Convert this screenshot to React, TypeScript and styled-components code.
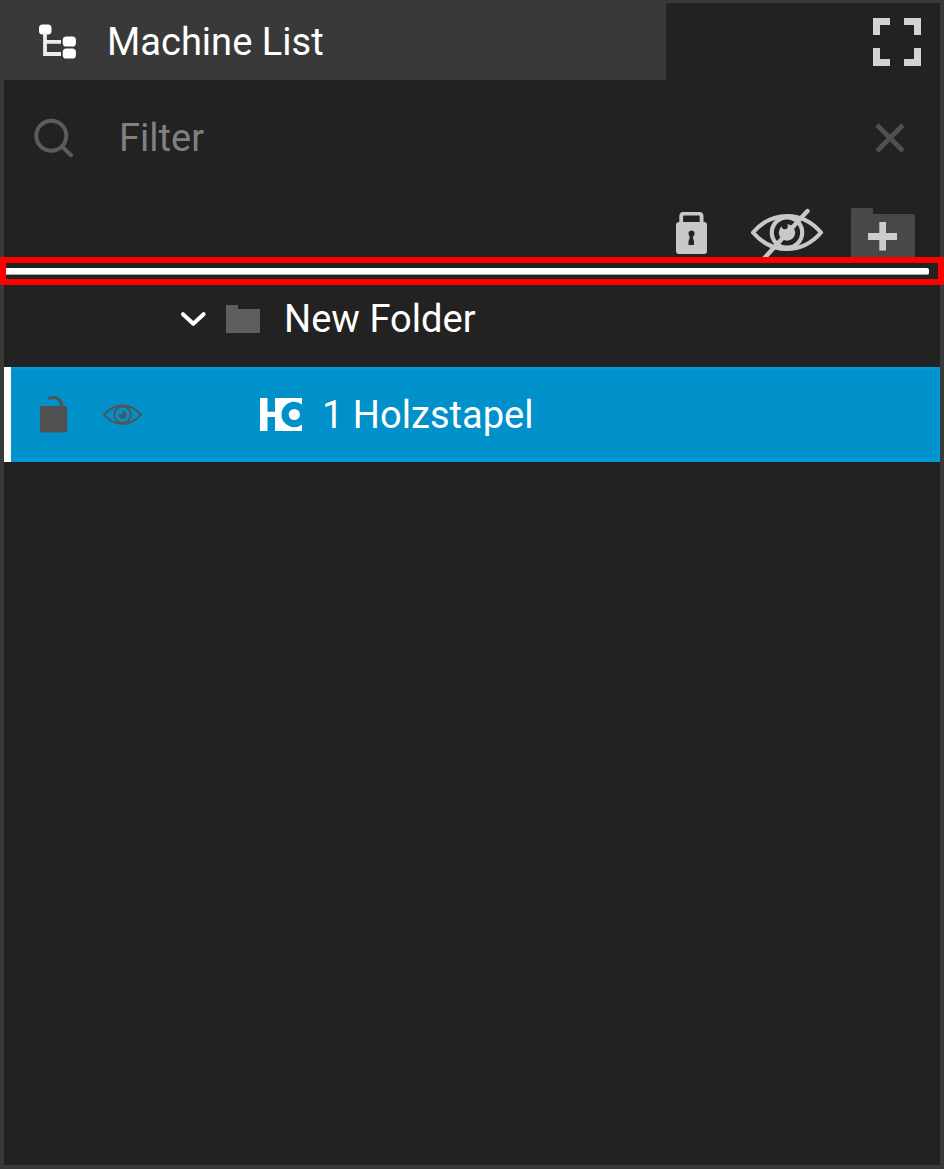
import React from "react";
import styled, { createGlobalStyle } from "styled-components";

const GlobalStyle = createGlobalStyle`
  * { box-sizing: border-box; }
  body { margin: 0; background: #222222; }
`;

const Panel = styled.main`
  display: flex;
  flex-direction: column;
  width: 944px;
  height: 1169px;
  border: 4px solid #393939;
  border-top-width: 3px;
  background: #222222;
  color: #ffffff;
  font-family: Roboto, "Liberation Sans", sans-serif;
  font-size: 38.1px;
  line-height: 46px;
`;

const Header = styled.header`
  display: flex;
  justify-content: space-between;
  height: 77px;
  flex: none;
`;

const Tab = styled.div`
  display: flex;
  align-items: center;
  gap: 30px;
  width: 662px;
  padding-left: 34px;
  background: #393939;
`;

const FullscreenButton = styled.button`
  display: flex;
  align-items: center;
  padding: 1px 15px 0 0;
  border: 0;
  background: none;
`;

const FilterRow = styled.label`
  display: flex;
  align-items: center;
  flex: none;
  height: 116px;
  padding: 0 34px 0 30px;
`;

const FilterInput = styled.input`
  flex: 1;
  min-width: 0;
  height: 46px;
  margin-left: 45px;
  padding: 0;
  border: 0;
  outline: 0;
  background: none;
  color: #ffffff;
  font: inherit;
  &::placeholder { color: #808080; opacity: 1; }
`;

const Toolbar = styled.div`
  display: flex;
  justify-content: flex-end;
  align-items: flex-end;
  flex: none;
  height: 61px;
  padding-right: 25px;
`;

const Tool = styled.button<{ $gap?: number; $lift?: number }>`
  display: flex;
  margin: 0 0 ${(p) => p.$lift ?? 0}px ${(p) => p.$gap ?? 0}px;
  padding: 0;
  border: 0;
  background: none;
`;

const DropZone = styled.div`
  flex: none;
  height: 28px;
  margin: 0 -4px;
  padding: 5px 9px 0 0;
  border: 6px solid #ff0000;
  background: #222222;
`;

const DropLine = styled.div`
  height: 7px;
  border-bottom: 1px solid #a3aa9f;
  border-radius: 0 2px 2px 0;
  background: #ffffff;
`;

const FolderRow = styled.div`
  display: flex;
  align-items: center;
  flex: none;
  height: 82px;
  padding: 0 0 14px 176px;
`;

const FolderIcon = styled.svg`
  margin: 0 24px 0 19px;
`;

const MachineRow = styled.div`
  display: flex;
  align-items: center;
  flex: none;
  height: 95px;
  padding-left: 29px;
  border-left: 7px solid #ffffff;
  background: #0090ca;
  box-shadow: inset -4px 0 3px -1px #009ada, inset 0 4px 3px -1px #009ada, inset 0 -7px 4px -2px #0099d8;
`;

const VisibilityIcon = styled.svg`
  margin: 0 118px 0 35px;
`;

const MachineName = styled.span`
  margin-left: 20px;
`;

const Label = styled.span`
  white-space: pre;
`;

export default function App() {
  return (
    <>
      <GlobalStyle />
      <Panel>
        <Header>
          <Tab>
            <svg width="39" height="36" viewBox="0 0 39 36" fill="#fff">
              <rect x="1" y="0.6" width="12.5" height="10" rx="3.5" />
              <path d="M7 9V30H23M7 17.8H23" fill="none" stroke="#ededed" strokeWidth="3.8" />
              <rect x="24.7" y="12.6" width="13.2" height="10" rx="3.7" />
              <rect x="24.7" y="24.6" width="13.2" height="10" rx="3.7" />
            </svg>
            <Label>Machine List</Label>
          </Tab>
          <FullscreenButton aria-label="Fullscreen">
            <svg width="56" height="48" viewBox="0 0 56 48" fill="#d3d3d3">
              <path d="M4 0H21V7H11V17H4ZM35 0H52V17H45V7H35ZM4 30H11V41H21V48H4ZM45 30H52V48H35V41H45Z" />
            </svg>
          </FullscreenButton>
        </Header>
        <FilterRow>
          <svg width="40" height="40" viewBox="0 0 40 40" fill="none" stroke="#5c5c5c" strokeWidth="4" strokeLinecap="round">
            <circle cx="17.3" cy="17.8" r="15" />
            <path d="M28.2 28.8L37 37.2" />
          </svg>
          <FilterInput placeholder="Filter" aria-label="Filter" />
          <svg width="32" height="32" viewBox="0 0 32 32" stroke="#505050" strokeWidth="4.8">
            <path d="M3 3L29 29M29 3L3 29" />
          </svg>
        </FilterRow>
        <Toolbar>
          <Tool aria-label="Lock" $lift={3}>
            <svg width="31" height="42" viewBox="0 0 31 42">
              <path d="M5.2 13V4.5Q5.2 1.7 8 1.7H22.8Q25.6 1.7 25.6 4.5V13" fill="none" stroke="#c8c8c8" strokeWidth="3.8" />
              <rect x="0" y="10" width="31" height="32" rx="3" fill="#c8c8c8" />
              <path d="M12.4 21.5a3.1 3.1 0 1 1 5.7 1.7L16.8 25.5 18 29.5V33H12.5V29.5L13.8 25.5Z" fill="#242424" />
            </svg>
          </Tool>
          <Tool aria-label="Hide" $gap={43}>
            <svg width="74" height="50" viewBox="0 0 74 50" fill="none" stroke="#c8c8c8">
              <path d="M3 25.5C22 3.5 52 3.5 71 25.5C52 47.5 22 47.5 3 25.5Z" strokeWidth="4.2" strokeLinejoin="round" />
              <circle cx="37" cy="25.5" r="15.2" strokeWidth="4.2" />
              <circle cx="37" cy="25.5" r="8.2" fill="#c8c8c8" stroke="none" />
              <circle cx="34.8" cy="19.2" r="3" fill="#222222" stroke="none" />
              <path d="M13.5 52L57.5 4" strokeWidth="4.4" strokeLinecap="round" />
            </svg>
          </Tool>
          <Tool aria-label="Add folder" $gap={27}>
            <svg width="64" height="50" viewBox="0 0 64 50">
              <path d="M0 50V2Q0 1 1 1H21Q22 1 22 2V7H62Q64 7 64 9V50Z" fill="#484848" />
              <path d="M28.3 15H35V26H46V33H35V43.5H28.3V33H17V26H28.3Z" fill="#cdcdcd" />
            </svg>
          </Tool>
        </Toolbar>
        <DropZone>
          <DropLine />
        </DropZone>
        <FolderRow>
          <svg width="27" height="16" viewBox="0 0 27 16" fill="none" stroke="#fff" strokeWidth="4" strokeLinecap="round" strokeLinejoin="round">
            <path d="M3 3.2L13.3 12.8L23.6 3.2" />
          </svg>
          <FolderIcon width="34" height="28" viewBox="0 0 34 28" fill="#5e5e5e">
            <path d="M0 0H12V4H34V28H0Z" />
          </FolderIcon>
          <Label>New Folder</Label>
        </FolderRow>
        <MachineRow>
          <svg width="27" height="37" viewBox="0 0 27 37">
            <path d="M9.5 2.2C16 .2 21.5 3 22 11" fill="none" stroke="#505255" strokeWidth="3" strokeLinecap="round" />
            <rect x="0" y="10" width="27" height="26.5" rx="2" fill="#505050" />
          </svg>
          <VisibilityIcon width="40" height="22" viewBox="0 0 40 22" fill="none" stroke="#505559">
            <path d="M2 10.7C12.5-1.6 28.5-1.6 39 10.7C28.5 23 12.5 23 2 10.7Z" strokeWidth="2" strokeLinejoin="round" />
            <circle cx="20.5" cy="10.7" r="8.3" strokeWidth="2" />
            <path d="M20.8 6.6A4.2 4.2 0 1 1 16.4 10.2C18.5 11.6 21.8 9.8 20.8 6.6Z" fill="#505559" stroke="none" />
          </VisibilityIcon>
          <svg width="42" height="33" viewBox="0 0 42 33" fill="#fff">
            <path d="M0 0H7.5V13.7H15V0H42V6.5A12.7 12.7 0 1 0 42 26.5V33H15V19H7.5V33H0Z" />
            <circle cx="34.3" cy="16.5" r="5.6" />
          </svg>
          <MachineName>1 Holzstapel</MachineName>
        </MachineRow>
      </Panel>
    </>
  );
}
